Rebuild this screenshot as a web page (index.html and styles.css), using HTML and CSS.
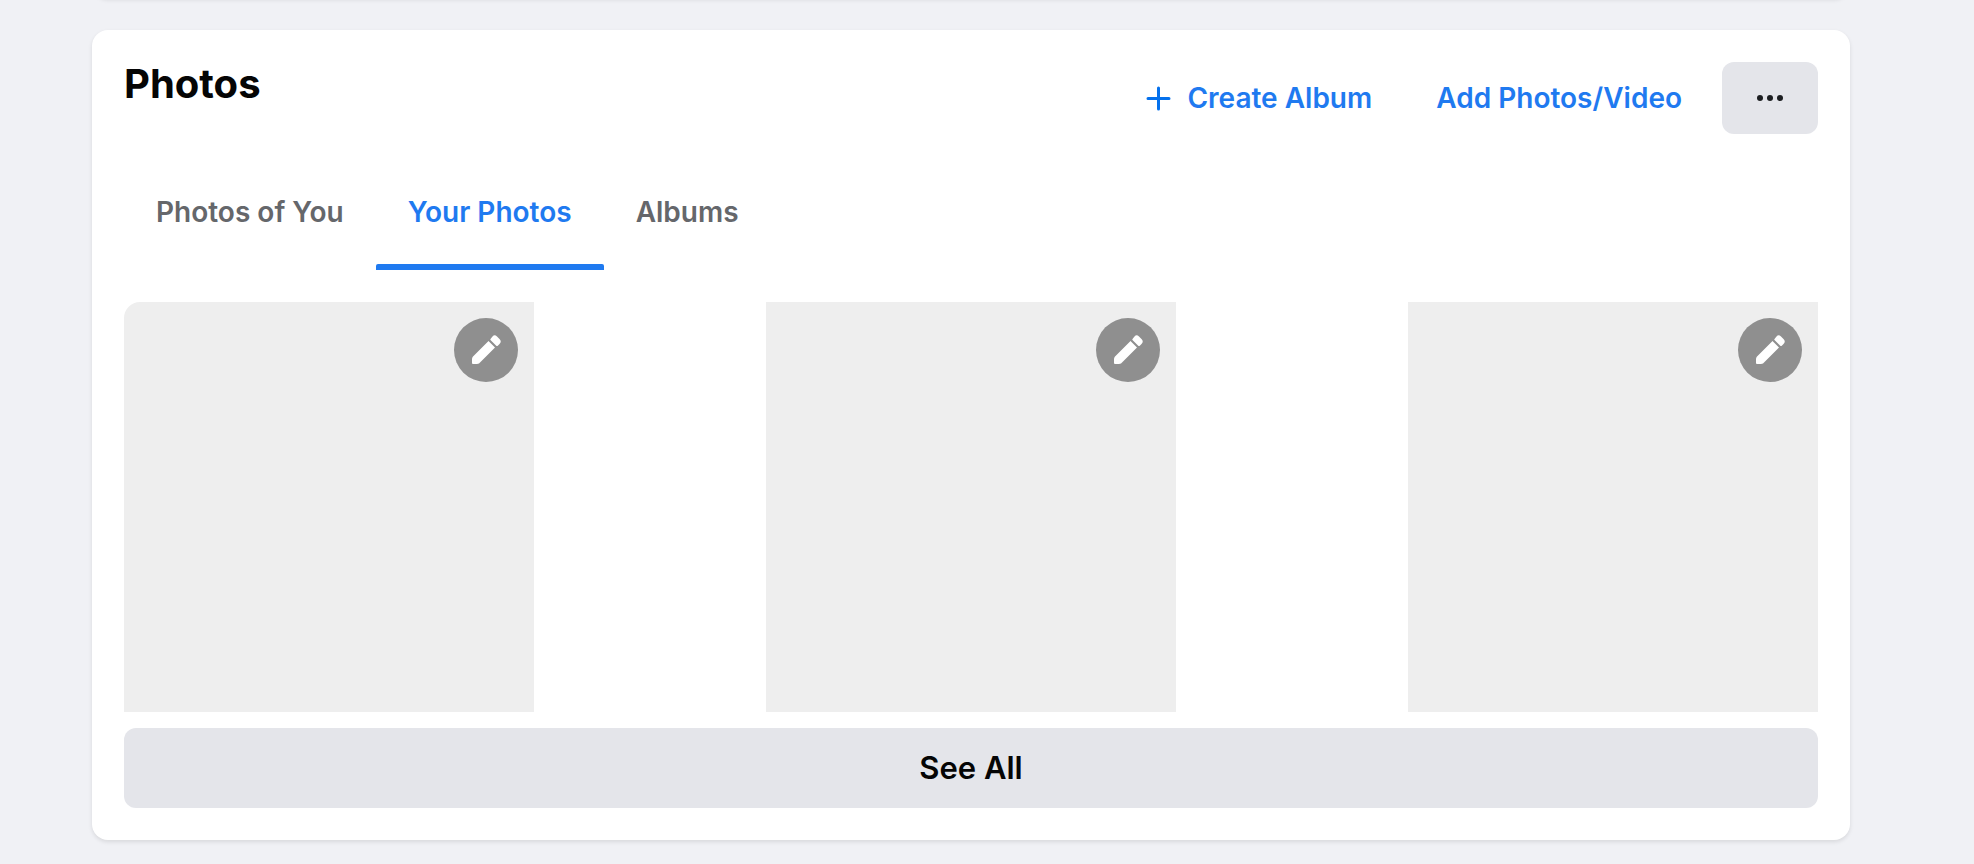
FILE: index.html
```html
<!DOCTYPE html>
<html lang="en">
<head>
    <meta charset="UTF-8" />
    <meta name="viewport" content="width=device-width, initial-scale=1.0" />
    <title>Photos</title>
    <link rel="stylesheet" href="styles.css">
</head>
<body>
    <div class="card card-above"></div>

    <main class="card photos">
        <div class="header">
            <h2><a href="#">Photos</a></h2>
            <div class="actions">
                <a class="action" href="#">
                    <svg class="icon" viewBox="0 0 32 32" aria-hidden="true">
                        <path d="M15.500 6v21M5 16.500h21" fill="none" stroke="#0571ed" stroke-width="3" stroke-linecap="round" />
                    </svg>
                    Create Album
                </a>
                <a class="action" href="#">Add Photos/Video</a>
                <button class="more" aria-label="More">
                    <svg class="icon" viewBox="0 0 32 32" aria-hidden="true">
                        <circle cx="6" cy="16" r="3" />
                        <circle cx="16" cy="16" r="3" />
                        <circle cx="26" cy="16" r="3" />
                    </svg>
                </button>
            </div>
        </div>

        <nav class="tabs">
            <a class="tab" href="#">Photos of You</a>
            <a class="tab active" href="#">Your Photos</a>
            <a class="tab" href="#">Albums</a>
        </nav>

        <!-- Photo tiles -->
        <div class="grid">
            <div class="photo">
                <button class="edit" aria-label="Edit">
                    <svg class="icon" viewBox="0 0 32 32" aria-hidden="true">
                        <path d="M18.500 7 L25 13.500 L11 27.500 Q9 30 7 30 H3 Q2 30 2 29 V25 Q2 23.500 3 22.500 Z" />
                        <path d="M20.500 5 L22.500 2.500 Q24.500 0 27 2.500 L29.500 5 Q32 7.500 29.500 10 L28 11.500 Q27 12.500 26 11.500 L20.500 6 Q20 5.500 20.500 5 Z" />
                    </svg>
                </button>
            </div>
            <div class="photo">
                <button class="edit" aria-label="Edit">
                    <svg class="icon" viewBox="0 0 32 32" aria-hidden="true">
                        <path d="M18.500 7 L25 13.500 L11 27.500 Q9 30 7 30 H3 Q2 30 2 29 V25 Q2 23.500 3 22.500 Z" />
                        <path d="M20.500 5 L22.500 2.500 Q24.500 0 27 2.500 L29.500 5 Q32 7.500 29.500 10 L28 11.500 Q27 12.500 26 11.500 L20.500 6 Q20 5.500 20.500 5 Z" />
                    </svg>
                </button>
            </div>
            <div class="photo">
                <button class="edit" aria-label="Edit">
                    <svg class="icon" viewBox="0 0 32 32" aria-hidden="true">
                        <path d="M18.500 7 L25 13.500 L11 27.500 Q9 30 7 30 H3 Q2 30 2 29 V25 Q2 23.500 3 22.500 Z" />
                        <path d="M20.500 5 L22.500 2.500 Q24.500 0 27 2.500 L29.500 5 Q32 7.500 29.500 10 L28 11.500 Q27 12.500 26 11.500 L20.500 6 Q20 5.500 20.500 5 Z" />
                    </svg>
                </button>
            </div>
        </div>

        <a class="see-all" href="#">See All</a>
    </main>
</body>
</html>
```
FILE: styles.css
```css
* {
    box-sizing: border-box;
}

body {
    font-family: Inter, sans-serif;
    background-color: #f0f1f5;
    margin: 0;
    padding: 0 124px 24px 92px;
}

a {
    color: inherit;
    text-decoration: none;
}

button {
    border: none;
    padding: 0;
    cursor: pointer;
    display: flex;
    align-items: center;
    justify-content: center;
}

.card {
    background-color: #ffffff;
    border-radius: 16px;
    box-shadow: 0 2px 4px rgba(0, 0, 0, 0.1);
}

/* Bottom edge of the card before this one */
.card-above {
    height: 32px;
    margin-top: -34px;
    margin-bottom: 32px;
}

.photos {
    padding: 32px;
}

.icon {
    width: 32px;
    height: 32px;
    flex: none;
}

.header {
    display: flex;
    justify-content: space-between;
    align-items: flex-start;
    margin-bottom: 16px;
}

h2 {
    margin: 0;
    font-size: 40px;
    font-weight: 700;
    line-height: 44px;
    color: #050505;
}

.actions {
    display: flex;
    gap: 16px;
}

.action {
    display: flex;
    align-items: center;
    gap: 12px;
    height: 72px;
    padding: 0 24px;
    font-size: 28px;
    font-weight: 600;
    color: #1f7af0;
}

.more {
    width: 96px;
    height: 72px;
    border-radius: 12px;
    background-color: #e4e5ea;
}

.more .icon {
    fill: #1c1e21;
}

/* Tabs */
.tabs {
    display: flex;
    margin-bottom: 32px;
}

.tab {
    height: 120px;
    padding: 0 32px;
    font-size: 28px;
    font-weight: 600;
    line-height: 124px;
    color: #65676b;
}

.tab.active {
    position: relative;
    color: #1f7af0;
}

.tab.active::after {
    content: "";
    position: absolute;
    left: 0;
    right: 0;
    bottom: 0;
    height: 6px;
    border-radius: 2px 2px 0 0;
    background-color: #1f7af0;
}

/* Photos */
.grid {
    display: flex;
    justify-content: space-between;
    margin-bottom: 16px;
}

.photo {
    width: 410px;
    height: 410px;
    padding: 16px;
    display: flex;
    justify-content: flex-end;
    background-color: #eeeeee;
}

.photo:first-child {
    border-top-left-radius: 16px;
}

.edit {
    width: 64px;
    height: 64px;
    border-radius: 50%;
    background-color: rgba(0, 0, 0, 0.4);
}

.edit .icon {
    fill: #ffffff;
}

.see-all {
    display: block;
    height: 80px;
    border-radius: 12px;
    background-color: #e4e5ea;
    font-size: 31px;
    font-weight: 600;
    line-height: 80px;
    text-align: center;
    color: #050505;
}
```
